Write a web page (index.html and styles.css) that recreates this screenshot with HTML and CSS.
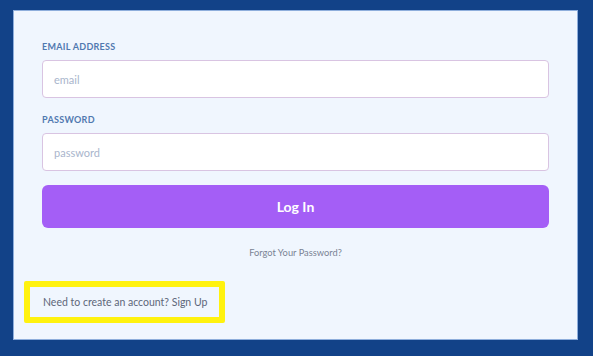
FILE: index.html
```html
<!DOCTYPE html>
<html>
<head>
<meta charset="utf-8">
<link rel="stylesheet" href="styles.css">
</head>
<body>
<div class="frame">
  <div class="panel">
    <form class="form">
      <label class="label">EMAIL ADDRESS</label>
      <div class="input"><span class="ph">email</span></div>
      <label class="label label-pw">PASSWORD</label>
      <div class="input"><span class="ph">password</span></div>
      <div class="button">Log In</div>
      <div class="forgot">Forgot Your Password?</div>
    </form>
    <div class="signup">Need to create an account? Sign Up</div>
  </div>
</div>
</body>
</html>
```

FILE: styles.css
```css
html, body {
  margin: 0;
  padding: 0;
  background: #124288;
}
.frame {
  width: 593px;
  height: 356px;
  box-sizing: border-box;
  padding: 10px 15px 16px 13px;
  background: #124288;
}
.panel {
  height: 100%;
  box-sizing: border-box;
  background: #f0f6fe;
  border: 1px solid #8eaedc;
  padding: 0 28px 0 28px;
  font-family: Lato, "Noto Sans", sans-serif;
}
.form {
  display: flex;
  flex-direction: column;
  padding-top: 30px;
}
.label {
  font-size: 9px;
  font-weight: 700;
  letter-spacing: 0.3px;
  color: #5079b0;
  height: 12px;
  line-height: 12px;
  margin-bottom: 7px;
}
.label-pw {
  margin-top: 16px;
}
.input {
  height: 38px;
  box-sizing: border-box;
  background: #ffffff;
  border: 1px solid #d9c4e2;
  border-radius: 4px;
  display: flex;
  align-items: center;
  padding-left: 11px;
}
.ph {
  font-size: 11px;
  color: #a9b5cc;
}
.button {
  margin-top: 14px;
  height: 43px;
  border-radius: 6px;
  background: #a45ef6;
  color: #ffffff;
  font-weight: 700;
  font-size: 14px;
  display: flex;
  align-items: center;
  justify-content: center;
}
.forgot {
  margin-top: 19px;
  text-align: center;
  font-size: 9.3px;
  color: #7a8394;
}
.signup {
  margin-top: 23px;
  margin-left: -18px;
  width: 201px;
  height: 42px;
  box-sizing: border-box;
  border: 6px solid #fff20f;
  border-radius: 2px;
  padding: 0 0 0 13px;
  line-height: 31px;
  font-size: 10.5px;
  white-space: nowrap;
  color: #5d6679;
}
```
